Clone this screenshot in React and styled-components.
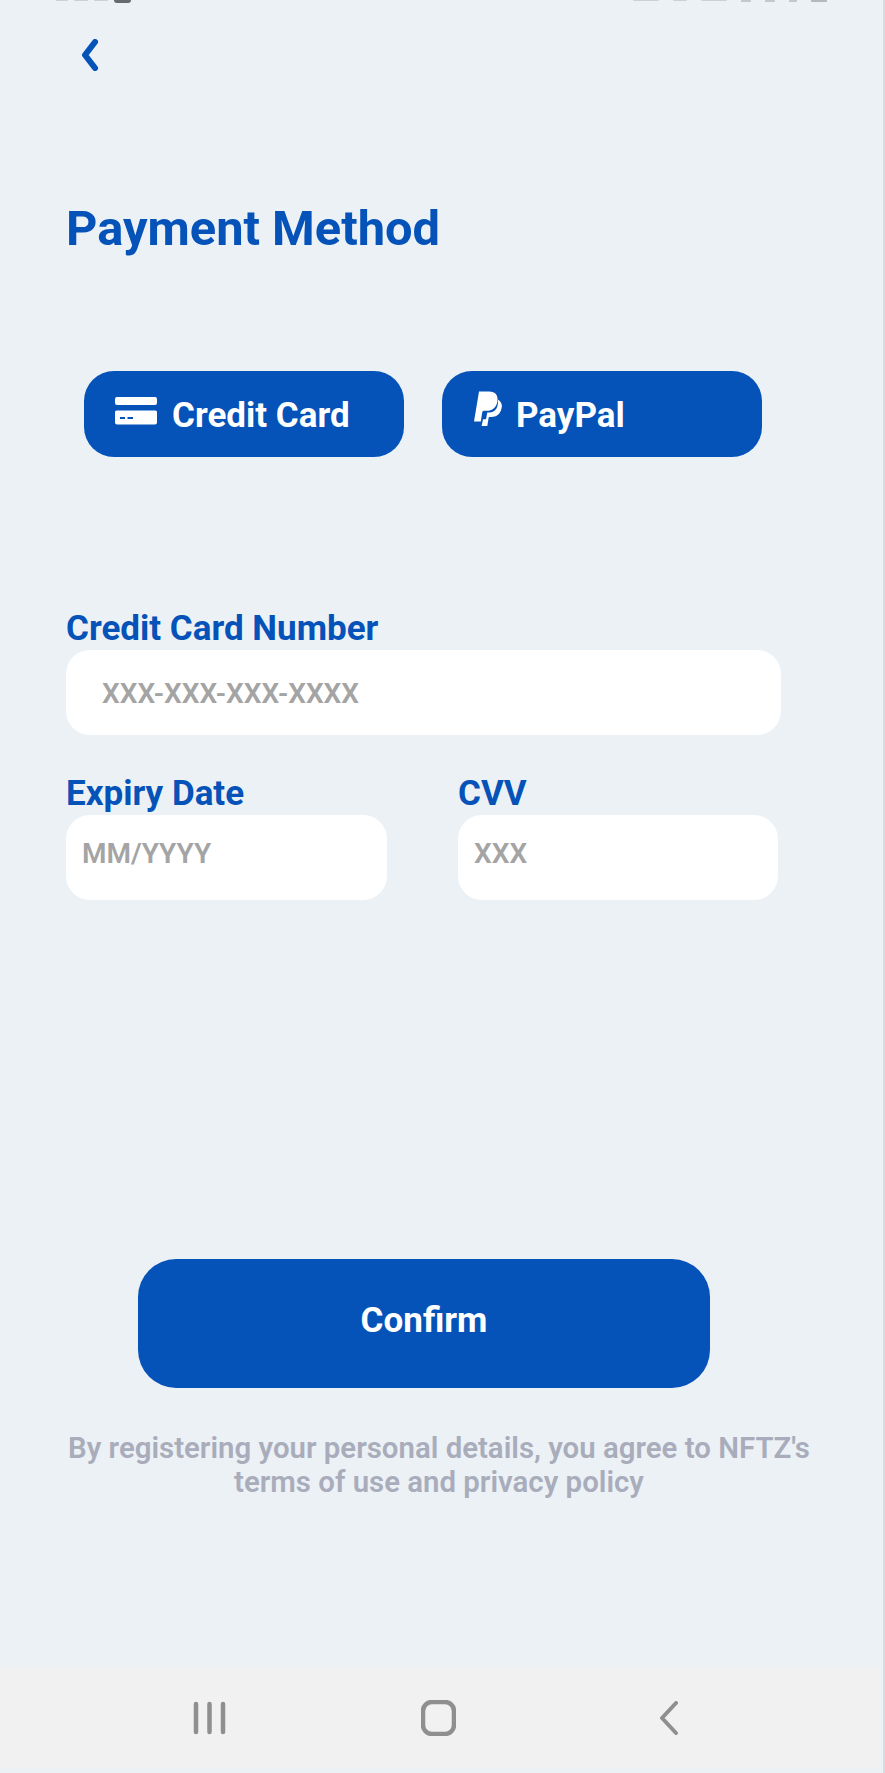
import React from "react";
import styled, { createGlobalStyle } from "styled-components";

const Global = createGlobalStyle`
  html, body { margin: 0; padding: 0; background: #fff; }
  * { box-sizing: border-box; }
`;

const BLUE = "#0552b8";

const Page = styled.div`
  width: 885px;
  height: 1773px;
  background: #ecf1f6;
  font-family: Roboto, "Liberation Sans", sans-serif;
  display: flex;
  flex-direction: column;
  overflow: hidden;
  border-right: 2px solid #d8dbdf;
`;

const StatusStrip = styled.div`
  height: 3px;
  padding: 0 56px 0 56px;
  display: flex;
  justify-content: space-between;
  flex: none;
`;

const StatusGroup = styled.div`
  display: flex;
  gap: ${(p) => p.$gap}px;
  height: 3px;
`;

const StatusMark = styled.i`
  display: block;
  width: ${(p) => p.$w}px;
  height: ${(p) => p.$h || 1}px;
  background: ${(p) => p.$c || "#ccd0d4"};
  border-radius: 0 0 ${(p) => (p.$round ? "8px 8px" : "1px 1px")};
`;

const Content = styled.main`
  flex: 1;
  padding: 36px 0 0 66px;
  display: flex;
  flex-direction: column;
`;

const BackIcon = styled.svg`
  display: block;
  width: 20px;
  height: 32px;
  margin-left: 14px;
  flex: none;
`;

const Title = styled.h1`
  margin: 130px 0 0;
  font-size: 48.8px;
  line-height: 56px;
  font-weight: 700;
  color: ${BLUE};
`;

const Tabs = styled.div`
  display: flex;
  gap: 38px;
  margin: 114px 0 0 18px;
`;

const Tab = styled.button`
  width: 320px;
  height: 86px;
  border: 0;
  border-radius: 30px;
  background: ${BLUE};
  color: #fff;
  font: 700 35px/40px Roboto, sans-serif;
  display: flex;
  align-items: center;
  padding: 4px 0 0 ${(p) => p.$pad}px;
  gap: ${(p) => p.$gap}px;
`;

const TabIcon = styled.svg`
  display: block;
  flex: none;
  margin-bottom: ${(p) => p.$lift}px;
`;

const Label = styled.label`
  display: block;
  font-size: 35px;
  line-height: 42px;
  font-weight: 700;
  color: ${BLUE};
`;

const FieldBlock = styled.div`
  width: ${(p) => p.$w}px;
  display: flex;
  flex-direction: column;
`;

const Form = styled.section`
  margin-top: 151px;
  display: flex;
  flex-direction: column;
  gap: 38px;
`;

const FieldRow = styled.div`
  display: flex;
  gap: 71px;
`;

const Field = styled.div`
  height: 85px;
  background: #fff;
  border-radius: 24px;
  display: flex;
  align-items: ${(p) => (p.$small ? "flex-start" : "center")};
  padding: ${(p) => (p.$small ? "19px 0 0 16px" : "2px 0 0 36px")};
  color: #a4a4a4;
  font-size: 28px;
  line-height: 40px;
  font-weight: 600;
`;

const Confirm = styled.button`
  width: 572px;
  height: 129px;
  margin: 359px 0 0 72px;
  border: 0;
  border-radius: 38px;
  background: ${BLUE};
  color: #fff;
  font: 700 35px/40px Roboto, sans-serif;
  padding: 0 0 6px;
`;

const Legal = styled.p`
  width: 760px;
  margin: 43px 0 0 -7px;
  text-align: center;
  font-size: 29.4px;
  line-height: 34px;
  font-weight: 600;
  color: #a9adbb;
`;

const NavBar = styled.nav`
  height: 101px;
  flex: none;
  background: #f1f1f1;
  display: flex;
  align-items: center;
  padding: 0 0 0 193px;
  margin-right: 3px;
`;

const NavIcon = styled.svg`
  display: block;
  flex: none;
  margin-right: ${(p) => p.$mr}px;
`;

const BottomGap = styled.div`
  height: 5px;
  flex: none;
`;

export default function App() {
  return (
    <Page>
      <Global />
      <StatusStrip>
        <StatusGroup $gap={6}>
          <StatusMark $w={12} />
          <StatusMark $w={14} />
          <StatusMark $w={14} />
          <StatusMark $w={17} $h={3} $c="#666a6e" $round />
        </StatusGroup>
        <StatusGroup $gap={14}>
          <StatusMark $w={26} />
          <StatusMark $w={14} />
          <StatusMark $w={26} />
          <StatusMark $w={10} $h={2} $c="#c4c8cc" />
          <StatusMark $w={10} $h={2} $c="#c4c8cc" />
          <StatusMark $w={8} $h={2} $c="#c4c8cc" />
          <StatusMark $w={16} $h={2} $c="#b5b9bd" />
        </StatusGroup>
      </StatusStrip>
      <Content>
        <BackIcon viewBox="0 0 20 32" fill="none" stroke={BLUE} strokeWidth="6" strokeLinecap="round" strokeLinejoin="round">
          <path d="M15 3 L5 16 L15 29" />
        </BackIcon>
        <Title>Payment Method</Title>
        <Tabs>
          <Tab $pad={31} $gap={15}>
            <TabIcon $lift={10} width="42" height="28" viewBox="0 0 42 28" fill="#fff">
              <rect x="0" y="0" width="42" height="8" rx="2" />
              <path d="M1.5 13.5 H40.5 Q42 13.5 42 15 V25.5 Q42 27.5 40 27.5 H2 Q0 27.5 0 25.5 V15 Q0 13.5 1.5 13.5 Z" />
              <path d="M5 21 H10 M12.5 21 H18" stroke={BLUE} strokeWidth="2" />
            </TabIcon>
            Credit Card
          </Tab>
          <Tab $pad={32} $gap={14}>
            <TabIcon $lift={14} width="28" height="36" viewBox="0 0 28 32" fill="#fff" preserveAspectRatio="none">
              <path d="M24 7.5 C27.5 9.5 28.5 12.5 27.5 15.5 C26 21 22 23 17.5 23 H14.8 L13.3 31 H7.6 L9 25 H12 L13.3 19 H15.5 C20.5 19 24.5 16 24 7.5 Z" />
              <path d="M5 0.5 H15 C21.5 0.5 24.5 4 23.4 9.5 C22 15.5 17.5 17.5 13 17.5 H10 C9 17.5 8.5 18 8.2 19 L6.8 27 H0 Z" />
            </TabIcon>
            PayPal
          </Tab>
        </Tabs>
        <Form>
          <FieldBlock $w={715}>
            <Label>Credit Card Number</Label>
            <Field>XXX-XXX-XXX-XXXX</Field>
          </FieldBlock>
          <FieldRow>
            <FieldBlock $w={321}>
              <Label>Expiry Date</Label>
              <Field $small>MM/YYYY</Field>
            </FieldBlock>
            <FieldBlock $w={320}>
              <Label>CVV</Label>
              <Field $small>XXX</Field>
            </FieldBlock>
          </FieldRow>
        </Form>
        <Confirm>Confirm</Confirm>
        <Legal>
          By registering your personal details, you agree to NFTZ's
          <br />
          terms of use and privacy policy
        </Legal>
      </Content>
      <NavBar>
        <NavIcon $mr={195} width="33" height="34" viewBox="0 0 33 34" fill="none" stroke="#8f8f8f" strokeWidth="4.5" strokeLinecap="round">
          <path d="M3 3 V31 M16.5 3 V31 M30 3 V31" />
        </NavIcon>
        <NavIcon $mr={203} width="35" height="36" viewBox="0 0 35 36" fill="none" stroke="#8f8f8f" strokeWidth="4.5">
          <rect x="2" y="2" width="31" height="32" rx="9" />
        </NavIcon>
        <NavIcon width="20" height="34" viewBox="0 0 20 34" fill="none" stroke="#8f8f8f" strokeWidth="4" strokeLinecap="round" strokeLinejoin="round">
          <path d="M17 2 L3 17 L17 32" />
        </NavIcon>
      </NavBar>
      <BottomGap />
    </Page>
  );
}
